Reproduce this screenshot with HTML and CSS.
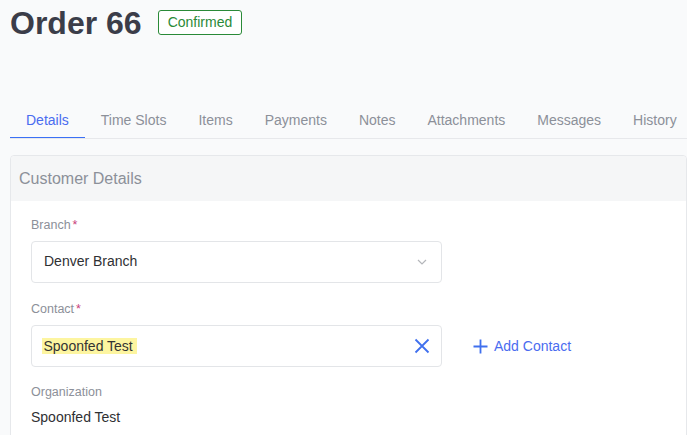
FILE: index.html
```html
<!DOCTYPE html>
<html lang="en">
<head>
<meta charset="utf-8">
<title>Order 66</title>
<link rel="stylesheet" href="styles.css">
</head>
<body>
<div class="page">
  <header class="title-row">
    <h1 class="title">Order 66</h1>
    <span class="badge">Confirmed</span>
  </header>

  <nav class="tabs">
    <a class="tab active">Details</a>
    <a class="tab">Time Slots</a>
    <a class="tab">Items</a>
    <a class="tab">Payments</a>
    <a class="tab">Notes</a>
    <a class="tab">Attachments</a>
    <a class="tab">Messages</a>
    <a class="tab">History</a>
  </nav>

  <section class="card">
    <div class="card-header">Customer Details</div>
    <div class="card-body">
      <div class="field field-first">
        <label class="label">Branch<span class="req">*</span></label>
        <div class="control select">
          <span class="control-text">Denver Branch</span>
          <svg class="chevron" width="10" height="6" viewBox="0 0 10 6"><path d="M1 1 L5 5 L9 1" fill="none" stroke="#b4b6ba" stroke-width="1.2"/></svg>
        </div>
      </div>

      <div class="field">
        <label class="label">Contact<span class="req">*</span></label>
        <div class="contact-row">
          <div class="control contact-input">
            <mark class="hl">Spoonfed Test</mark>
            <svg class="clear" width="16" height="16" viewBox="0 0 16 16"><path d="M1.5 1.5 L14.5 14.5 M14.5 1.5 L1.5 14.5" fill="none" stroke="#4070ee" stroke-width="1.8"/></svg>
          </div>
          <a class="add-link">
            <svg width="15" height="15" viewBox="0 0 15 15"><path d="M7.5 0.5 V14.5 M0.5 7.5 H14.5" fill="none" stroke="#4070ee" stroke-width="1.8"/></svg>
            <span>Add Contact</span>
          </a>
        </div>
      </div>

      <div class="field">
        <label class="label">Organization</label>
        <div class="value">Spoonfed Test</div>
      </div>
    </div>
  </section>
</div>
</body>
</html>
```

FILE: styles.css
```css
html, body {
  margin: 0;
  padding: 0;
}
body {
  background: #f9fafb;
  font-family: "Liberation Sans", Arial, sans-serif;
  overflow: hidden;
  width: 687px;
  height: 435px;
}
.page {
  padding-left: 10px;
}
.title-row {
  display: flex;
  align-items: flex-start;
  padding-top: 5px;
}
.title {
  margin: 0;
  font-size: 32px;
  line-height: 37px;
  font-weight: 700;
  color: #3b3d49;
}
.badge {
  margin-left: 16px;
  margin-top: 5px;
  padding: 3px 9px;
  line-height: 17px;
  font-size: 14px;
  color: #2a8a38;
  border: 1px solid #2a8a38;
  border-radius: 3px;
  background: #ffffff;
}
.tabs {
  display: flex;
  flex-wrap: nowrap;
  overflow: hidden;
  margin-top: 68px;
  border-bottom: 1px solid #e7e8eb;
}
.tab {
  flex-shrink: 0;
  padding: 0 16px 7px;
  line-height: 20px;
  font-size: 14px;
  color: #8c9099;
  border-bottom: 2px solid transparent;
  margin-bottom: -1px;
}
.tab.active {
  color: #4a6cf0;
  border-bottom-color: #3b70f5;
}
.card {
  margin-top: 16px;
  background: #ffffff;
  border: 1px solid #e6e8eb;
  border-radius: 4px;
  height: 300px;
}
.card-header {
  background: #f5f6f7;
  padding: 13px 8px 12px;
  font-size: 16px;
  line-height: 20px;
  color: #8c9099;
  border-radius: 4px 4px 0 0;
}
.card-body {
  padding: 16px 20px;
}
.field {
  margin-bottom: 17px;
}
.field-first {
  margin-bottom: 18px;
}
.label {
  display: block;
  font-size: 12.5px;
  line-height: 16px;
  color: #8c9099;
  margin-bottom: 8px;
}
.req {
  color: #c8407a;
  margin-left: 2px;
}
.control {
  box-sizing: border-box;
  width: 411px;
  height: 42px;
  border: 1px solid #e3e5e8;
  border-radius: 4px;
  background: #ffffff;
  display: flex;
  align-items: center;
  justify-content: space-between;
}
.select {
  padding: 0 14px 0 12px;
  font-size: 14px;
  color: #2f3033;
}
.control-text {
  position: relative;
  top: -1px;
}
.contact-row {
  display: flex;
  align-items: center;
  gap: 31px;
}
.contact-input {
  padding: 0 11px 0 10px;
}
.hl {
  background: #fdf5a0;
  color: #333333;
  font-size: 14px;
  padding: 0 4px 0 1.5px;
}
.clear {
  display: block;
}
.add-link {
  display: flex;
  align-items: center;
  gap: 6px;
  font-size: 14px;
  color: #4a6cf0;
}
.add-link svg {
  display: block;
}
.value {
  font-size: 14px;
  line-height: 19px;
  color: #2f3033;
}
```
